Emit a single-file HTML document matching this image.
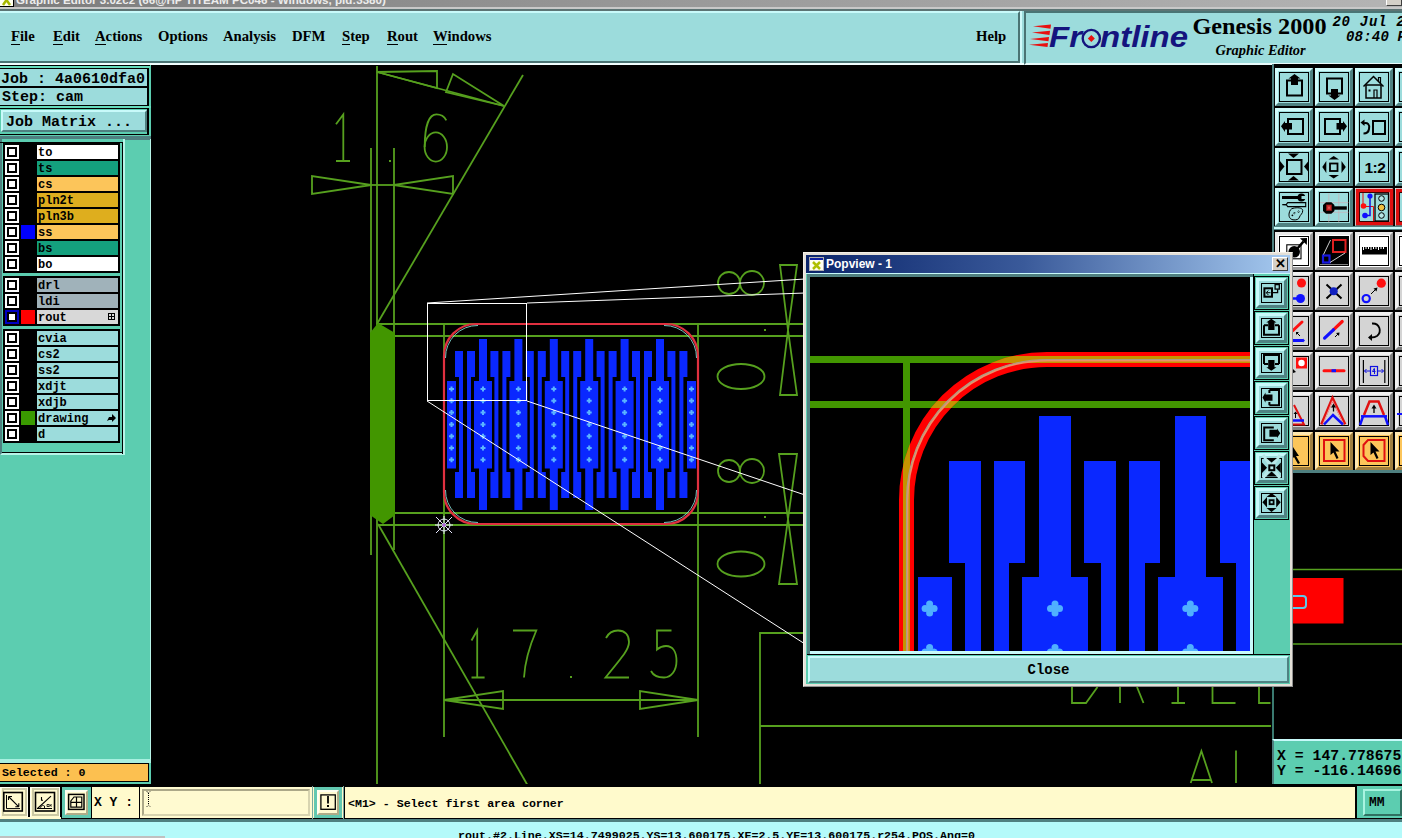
<!DOCTYPE html><html><head><meta charset="utf-8"><style>
*{box-sizing:border-box}
html{overflow:hidden;width:1402px;height:838px}
body{margin:0;width:1402px;height:838px;overflow:hidden;position:relative;background:#000;font-family:"Liberation Sans",sans-serif}
.ab{position:absolute}
.mono{font-family:"Liberation Mono",monospace;font-weight:bold}
.serif{font-family:"Liberation Serif",serif;font-weight:bold}
.menu span{position:absolute;top:14px;font-size:14.7px;line-height:18px}
.menu u{text-decoration:none;border-bottom:1px solid #000}
.row{position:absolute;left:3px;width:117px;height:14px}
.cb{position:absolute;left:2px;top:0;width:14px;height:14px;background:#fff;border:2px solid #fff}
.cb:after{content:"";position:absolute;left:0;top:0;width:10px;height:10px;border:2px solid #000;box-sizing:border-box}
.nm{position:absolute;left:34px;top:0;width:81px;height:14px;font-size:12px;line-height:14px;padding:1px 0 0 1px;color:#000;overflow:visible}
.tb{position:absolute;width:38px;height:38px;background:#9cdcdc;border-top:2px solid #d0fafa;border-left:2px solid #d0fafa;border-right:2px solid #4f8282;border-bottom:2px solid #4f8282}
.tb i{position:absolute;left:2px;top:2px;right:2px;bottom:2px;border:2px solid #000;border-top-color:#000}
</style></head><body>

<div class="ab" style="left:0;top:0;width:1402px;height:8px;background:linear-gradient(90deg,#7c7c7c,#9a9a9a 50%,#b4b4b4);overflow:hidden">
<div class="ab" style="left:0;top:-8px;width:14px;height:15px;background:#fffff0;border-bottom:1px solid #000;border-right:1px solid #000"><svg width="13" height="14" style="position:absolute;left:0;top:0"><path d="M3,3 L10,13 M10,3 L3,13" stroke="#a8b800" stroke-width="2.5"/></svg></div>
<div class="ab" style="left:16px;top:-7px;font-size:11.6px;font-weight:bold;color:#ececec;white-space:nowrap;line-height:13px">Graphic Editor 3.02c2 (66@HP TITEAM PC046 - Windows, pid:3380)</div>
<div class="ab" style="left:1386px;top:-6px;width:16px;height:12px;background:#d4d0c8;border:1px solid #fff;border-right-color:#404040;border-bottom-color:#404040"></div>
</div>
<div class="ab" style="left:0;top:7px;width:1402px;height:2px;background:#c8c8c8"></div>
<div class="ab" style="left:0;top:9px;width:1402px;height:2px;background:#5c7474"></div>

<div class="ab menu serif" style="left:0;top:11px;width:1020px;height:52px;background:#9cdcdc;border-top:2px solid #c8fafa;border-bottom:2px solid #4a7474;border-right:2px solid #4a7474">

<span style="left:11px"><u>F</u>ile</span>
<span style="left:53px"><u>E</u>dit</span>
<span style="left:95px"><u>A</u>ctions</span>
<span style="left:158px">Options</span>
<span style="left:223px">Analysis</span>
<span style="left:292px">DFM</span>
<span style="left:342px"><u>S</u>tep</span>
<span style="left:387px"><u>R</u>out</span>
<span style="left:433px"><u>W</u>indows</span>
<span style="left:976px">Help</span>
</div>
<div class="ab" style="left:1020px;top:11px;width:5px;height:53px;background:#9cdcdc;border-left:2px solid #d0fafa"></div>
<div class="ab" style="left:1024px;top:11px;width:378px;height:54px;background:#9cdcdc;border-top:2px solid #4a7474;border-left:2px solid #4a7474;border-bottom:2px solid #e8fcfc"></div>
<div class="ab" style="left:0;top:63px;width:1024px;height:2px;background:#f0ffff"></div>
<svg class="ab" style="left:1024px;top:11px" width="378" height="53" viewBox="1024 11 378 53">
<g fill="#e81010"><polygon points="1033,26.3 1051,24.5 1050.5,28.8"/><polygon points="1032,32.6 1050,30.8 1049.5,35"/><polygon points="1030,38.9 1049,37 1048.5,41.3"/><polygon points="1029,44.8 1048,43 1047.5,47"/></g>
<text x="1049" y="46.8" font-family="Liberation Sans" font-weight="bold" font-style="italic" font-size="30" fill="#14147e" textLength="33" lengthAdjust="spacingAndGlyphs">Fr</text>
<circle cx="1091.3" cy="38.5" r="8.6" fill="none" stroke="#14147e" stroke-width="2.4"/>
<polygon points="1091.3,35 1094.8,38.5 1091.3,42 1087.8,38.5" fill="#e81010"/>
<text x="1100" y="46.8" font-family="Liberation Sans" font-weight="bold" font-style="italic" font-size="30" fill="#14147e" textLength="88" lengthAdjust="spacingAndGlyphs">ntline</text>
<text x="1192.5" y="33.8" font-family="Liberation Serif" font-weight="bold" font-size="24" fill="#000" textLength="134" lengthAdjust="spacingAndGlyphs">Genesis 2000</text>
<text x="1215.5" y="55" font-family="Liberation Serif" font-weight="bold" font-style="italic" font-size="14" fill="#000" textLength="90" lengthAdjust="spacingAndGlyphs">Graphic Editor</text>
<text x="1332.5" y="25.8" font-family="Liberation Mono" font-weight="bold" font-style="italic" font-size="14" fill="#000" letter-spacing="0.7" xml:space="preserve">20 Jul 2006</text>
<text x="1346" y="40.7" font-family="Liberation Mono" font-weight="bold" font-style="italic" font-size="14" fill="#000" letter-spacing="0.2" xml:space="preserve">08:40 PM</text>
</svg>
<div class="ab" style="left:0;top:65px;width:151px;height:719px;background:#5ccdb0"></div>
<div class="ab" style="left:0;top:65px;width:150px;height:1px;background:#000"></div>
<div class="ab" style="left:0;top:66px;width:150px;height:2px;background:#66dcbc"></div>
<div class="ab mono" style="left:0;top:68px;width:149px;height:20px;background:#9cdcdc;border-top:1px solid #000;border-bottom:2px solid #000;border-right:2px solid #000;font-size:15px;line-height:17px;padding:2px 0 0 1px;white-space:pre">Job : 4a0610dfa0</div>
<div class="ab mono" style="left:0;top:88px;width:149px;height:18px;background:#9cdcdc;border-bottom:1px solid #000;border-right:2px solid #000;font-size:15px;line-height:17px;padding:1px 0 0 2px;white-space:pre">Step: cam</div>
<div class="ab" style="left:0;top:106px;width:151px;height:2px;background:#66dcbc"></div>
<div class="ab" style="left:0;top:108px;width:149px;height:27px;border:1px solid #000;border-left:none;border-right:2px solid #000;background:#5ccdb0"></div>
<div class="ab mono" style="left:1px;top:110px;width:146px;height:22px;background:#9cdcdc;border-top:2px solid #c8fafa;border-left:2px solid #c8fafa;border-right:2px solid #4f8080;border-bottom:2px solid #4f8080;font-size:15px;line-height:17px;padding:2px 0 0 3px;white-space:pre">Job Matrix ...</div>
<div class="ab" style="left:0;top:134px;width:149px;height:1px;background:#000"></div>
<div class="ab" style="left:0;top:136px;width:151px;height:3.5px;background:#4f8080"></div>
<div class="ab" style="left:123px;top:139px;width:2px;height:316px;background:#b8f4e8"></div><div class="ab" style="left:149.5px;top:139px;width:1.5px;height:622px;background:#b8f4e8"></div><div class="ab" style="left:0;top:758.5px;width:151px;height:2.5px;background:#a8f0e0"></div>
<div class="ab" style="left:0;top:139px;width:123px;height:316px;background:#5ccdb0;border-left:2px solid #4f8080;border-bottom:2px solid #b8f4e8"></div>
<div class="ab" style="left:0;top:141.5px;width:123px;height:1.5px;background:#000"></div>
<div class="ab" style="left:121.5px;top:141.5px;width:1.5px;height:312px;background:#000"></div>
<div class="ab" style="left:2px;top:451.5px;width:121px;height:1.5px;background:#000"></div>

<div class="ab" style="left:3px;top:143px;width:117px;height:130px;background:#000"></div>
<div class="row" style="top:145px"><div class="cb"></div>
<div class="nm mono" style="background:#ffffff">to</div></div>
<div class="row" style="top:161px"><div class="cb"></div>
<div class="nm mono" style="background:#14a07e">ts</div></div>
<div class="row" style="top:177px"><div class="cb"></div>
<div class="nm mono" style="background:#fcc55a">cs</div></div>
<div class="row" style="top:193px"><div class="cb"></div>
<div class="nm mono" style="background:#deae1e">pln2t</div></div>
<div class="row" style="top:209px"><div class="cb"></div>
<div class="nm mono" style="background:#deae1e">pln3b</div></div>
<div class="row" style="top:225px"><div class="cb"></div>
<div class="ab" style="left:18px;top:0;width:14px;height:14px;background:#0000ff"></div>
<div class="nm mono" style="background:#fcc55a">ss</div></div>
<div class="row" style="top:241px"><div class="cb"></div>
<div class="nm mono" style="background:#14a07e">bs</div></div>
<div class="row" style="top:257px"><div class="cb"></div>
<div class="nm mono" style="background:#ffffff">bo</div></div>
<div class="ab" style="left:3px;top:276px;width:117px;height:50px;background:#000"></div>
<div class="row" style="top:278px"><div class="cb"></div>
<div class="nm mono" style="background:#a0b2ba">drl</div></div>
<div class="row" style="top:294px"><div class="cb"></div>
<div class="nm mono" style="background:#a0b2ba">ldi</div></div>
<div class="row" style="top:310px"><div class="cb" style="border-color:#0000c0"></div>
<div class="ab" style="left:18px;top:0;width:14px;height:14px;background:#ff0000"></div>
<div class="nm mono" style="background:#d8d8d8">rout<span style="position:absolute;right:3px;top:3px;width:7px;height:7px;border:1px solid #000;background:linear-gradient(#000,#000) 2px 0/1px 7px no-repeat,linear-gradient(#000,#000) 0 2px/7px 1px no-repeat"></span></div></div>
<div class="ab" style="left:3px;top:329px;width:117px;height:114px;background:#000"></div>
<div class="row" style="top:331px"><div class="cb"></div>
<div class="nm mono" style="background:#9cdcdc">cvia</div></div>
<div class="row" style="top:347px"><div class="cb"></div>
<div class="nm mono" style="background:#9cdcdc">cs2</div></div>
<div class="row" style="top:363px"><div class="cb"></div>
<div class="nm mono" style="background:#9cdcdc">ss2</div></div>
<div class="row" style="top:379px"><div class="cb"></div>
<div class="nm mono" style="background:#9cdcdc">xdjt</div></div>
<div class="row" style="top:395px"><div class="cb"></div>
<div class="nm mono" style="background:#9cdcdc">xdjb</div></div>
<div class="row" style="top:411px"><div class="cb"></div>
<div class="ab" style="left:18px;top:0;width:14px;height:14px;background:#3a9a00"></div>
<div class="nm mono" style="background:#9cdcdc">drawing<svg style="position:absolute;right:2px;top:3px" width="9" height="8"><polygon points="0,7 2,3 5,3 5,0 9,4 5,8 5,6 2,6" fill="#000"/></svg></div></div>
<div class="row" style="top:427px"><div class="cb"></div>
<div class="nm mono" style="background:#9cdcdc">d</div></div>
<div class="ab" style="left:0;top:761px;width:151px;height:2px;background:#a8f0e0"></div>
<div class="ab mono" style="left:0;top:763px;width:149px;height:19px;background:#fcc050;border:1px solid #000;border-left:none;font-size:11.6px;line-height:17px;padding-left:2px;white-space:pre">Selected : 0</div>
<svg class="ab" style="left:0;top:0" width="1402" height="838" viewBox="0 0 1402 838">
<defs><clipPath id="cv"><rect x="151" y="65" width="1251" height="721"/></clipPath></defs>
<g clip-path="url(#cv)" fill="none" stroke="#56a01e" stroke-width="1.8">
<line x1="377" y1="66" x2="377" y2="786"/>
<line x1="371" y1="148" x2="371" y2="555"/>
<line x1="394" y1="148" x2="394" y2="550"/>
<line x1="371" y1="185" x2="394" y2="185"/>
<polygon points="312,176 312,194 371,185"/><polygon points="394,185 453,176 453,194"/>
<line x1="523" y1="75" x2="377" y2="324" />
<polygon points="377,72 437,71 437,88"/><polygon points="504,106 453,74 446,92"/><line x1="377" y1="72" x2="504" y2="106"/>
<path d="M336,124.3 L343.3,114.4 L343.3,161 M336,161 L350,161"/>
<path d="M446.3,120.3 C444,116 440,114.4 436.5,114.4 C429,114.4 424.7,126 424.7,147"/><ellipse cx="435.8" cy="147" rx="11.2" ry="14.6"/>
<rect x="389" y="160" width="2" height="2" fill="#56a01e" stroke="none"/>
<line x1="378" y1="324" x2="1272" y2="324"/>
<line x1="394" y1="336" x2="1272" y2="336"/>
<line x1="394" y1="513" x2="1272" y2="513"/>
<line x1="378" y1="525" x2="1272" y2="525"/>
<line x1="444" y1="324" x2="444" y2="737"/>
<line x1="698" y1="324" x2="698" y2="737"/>
<line x1="378" y1="524" x2="528" y2="786"/>
<line x1="444" y1="700" x2="698" y2="700"/>
<polygon points="444,700 503,691 503,709"/><polygon points="698,700 640,691 640,709"/>
<path d="M471.5,640.5 L477.2,630.5 L477.2,677.5 M471.5,677.5 L484.6,677.5"/>
<path d="M513,630.5 L536.3,630.5 C530,645 525,660 524,677.5"/>
<rect x="570" y="676" width="2" height="2" fill="#56a01e" stroke="none"/>
<path d="M606,638 C609,632 613,630.5 618,630.5 C625,630.5 629,635 629,642 C629,649 624,655 605.5,677.5 L629,677.5"/>
<path d="M671.5,630.5 L657,630.5 L657,649.5 C660,647 663,646 666,646 C673,646 676.5,652 676.5,661 C676.5,671 671,677.5 664,677.5 C658,677.5 653,675 651,671"/>
<circle cx="729" cy="283" r="11"/><circle cx="752" cy="283" r="12"/>
<circle cx="729" cy="471" r="11"/><circle cx="752" cy="471" r="12"/>
<ellipse cx="741" cy="376.5" rx="23.5" ry="12.5"/>
<ellipse cx="741" cy="564" rx="23.5" ry="12.5"/>
<polygon points="780,265 797,265 788,330 797,395 780,395 788,330"/>
<polygon points="779,454 797,454 788,519 797,584 779,584 788,519"/>
<rect x="764" y="329" width="2" height="2" fill="#56a01e" stroke="none"/><rect x="764" y="516" width="2" height="2" fill="#56a01e" stroke="none"/>
<path d="M760,786 L760,633 L810,633"/>
<line x1="760" y1="726" x2="1271" y2="726"/>
<line x1="1273" y1="470" x2="1273" y2="786" stroke="#3a7a70" stroke-width="2"/>
<line x1="1290" y1="569.5" x2="1402" y2="569.5" stroke-width="1.5"/><line x1="1290" y1="644" x2="1402" y2="644" stroke-width="1.5"/>
<path d="M1072,686 L1072,703 L1086,703 L1097.5,687"/>
<path d="M1120,686 L1120,703 M1137,687 L1143.5,703"/>
<path d="M1178,686 L1178,703 M1171.5,703 L1185,703"/>
<path d="M1212.5,686 L1212.5,703 L1235.5,703 M1259,686 L1259,703 L1270.5,703"/>
<path d="M1190.7,783 L1201.4,751 L1212,783 M1191.5,780 H1211"/>
<line x1="1236" y1="750.5" x2="1236" y2="783"/>
</g>
<polygon points="370,333 378,323 395,333 395,515 383,524 370,515" fill="#429600" clip-path="url(#cv)"/>
<g clip-path="url(#cv)">
<rect x="447.0" y="381.0" width="9.0" height="87.5" fill="#0a28ff"/>
<rect x="687.0" y="381.0" width="9.0" height="87.5" fill="#0a28ff"/>
<rect x="479.0" y="339.0" width="8.0" height="171.0" fill="#0a28ff"/>
<rect x="474.0" y="381.0" width="18.0" height="87.5" fill="#0a28ff"/>
<rect x="514.4" y="339.0" width="8.0" height="171.0" fill="#0a28ff"/>
<rect x="509.4" y="381.0" width="18.0" height="87.5" fill="#0a28ff"/>
<rect x="549.8" y="339.0" width="8.0" height="171.0" fill="#0a28ff"/>
<rect x="544.8" y="381.0" width="18.0" height="87.5" fill="#0a28ff"/>
<rect x="585.2" y="339.0" width="8.0" height="171.0" fill="#0a28ff"/>
<rect x="580.2" y="381.0" width="18.0" height="87.5" fill="#0a28ff"/>
<rect x="620.6" y="339.0" width="8.0" height="171.0" fill="#0a28ff"/>
<rect x="615.6" y="381.0" width="18.0" height="87.5" fill="#0a28ff"/>
<rect x="656.0" y="339.0" width="8.0" height="171.0" fill="#0a28ff"/>
<rect x="651.0" y="381.0" width="18.0" height="87.5" fill="#0a28ff"/>
<rect x="455.0" y="351.0" width="8.0" height="26.0" fill="#0a28ff"/>
<rect x="459.0" y="377.0" width="4.0" height="95.0" fill="#0a28ff"/>
<rect x="455.0" y="472.0" width="8.0" height="26.0" fill="#0a28ff"/>
<rect x="467.0" y="351.0" width="8.0" height="26.0" fill="#0a28ff"/>
<rect x="467.0" y="377.0" width="4.0" height="95.0" fill="#0a28ff"/>
<rect x="467.0" y="472.0" width="8.0" height="26.0" fill="#0a28ff"/>
<rect x="490.4" y="351.0" width="8.0" height="26.0" fill="#0a28ff"/>
<rect x="494.4" y="377.0" width="4.0" height="95.0" fill="#0a28ff"/>
<rect x="490.4" y="472.0" width="8.0" height="26.0" fill="#0a28ff"/>
<rect x="502.4" y="351.0" width="8.0" height="26.0" fill="#0a28ff"/>
<rect x="502.4" y="377.0" width="4.0" height="95.0" fill="#0a28ff"/>
<rect x="502.4" y="472.0" width="8.0" height="26.0" fill="#0a28ff"/>
<rect x="525.8" y="351.0" width="8.0" height="26.0" fill="#0a28ff"/>
<rect x="529.8" y="377.0" width="4.0" height="95.0" fill="#0a28ff"/>
<rect x="525.8" y="472.0" width="8.0" height="26.0" fill="#0a28ff"/>
<rect x="537.8" y="351.0" width="8.0" height="26.0" fill="#0a28ff"/>
<rect x="537.8" y="377.0" width="4.0" height="95.0" fill="#0a28ff"/>
<rect x="537.8" y="472.0" width="8.0" height="26.0" fill="#0a28ff"/>
<rect x="561.2" y="351.0" width="8.0" height="26.0" fill="#0a28ff"/>
<rect x="565.2" y="377.0" width="4.0" height="95.0" fill="#0a28ff"/>
<rect x="561.2" y="472.0" width="8.0" height="26.0" fill="#0a28ff"/>
<rect x="573.2" y="351.0" width="8.0" height="26.0" fill="#0a28ff"/>
<rect x="573.2" y="377.0" width="4.0" height="95.0" fill="#0a28ff"/>
<rect x="573.2" y="472.0" width="8.0" height="26.0" fill="#0a28ff"/>
<rect x="596.6" y="351.0" width="8.0" height="26.0" fill="#0a28ff"/>
<rect x="600.6" y="377.0" width="4.0" height="95.0" fill="#0a28ff"/>
<rect x="596.6" y="472.0" width="8.0" height="26.0" fill="#0a28ff"/>
<rect x="608.6" y="351.0" width="8.0" height="26.0" fill="#0a28ff"/>
<rect x="608.6" y="377.0" width="4.0" height="95.0" fill="#0a28ff"/>
<rect x="608.6" y="472.0" width="8.0" height="26.0" fill="#0a28ff"/>
<rect x="632.0" y="351.0" width="8.0" height="26.0" fill="#0a28ff"/>
<rect x="636.0" y="377.0" width="4.0" height="95.0" fill="#0a28ff"/>
<rect x="632.0" y="472.0" width="8.0" height="26.0" fill="#0a28ff"/>
<rect x="644.0" y="351.0" width="8.0" height="26.0" fill="#0a28ff"/>
<rect x="644.0" y="377.0" width="4.0" height="95.0" fill="#0a28ff"/>
<rect x="644.0" y="472.0" width="8.0" height="26.0" fill="#0a28ff"/>
<rect x="667.4" y="351.0" width="8.0" height="26.0" fill="#0a28ff"/>
<rect x="671.4" y="377.0" width="4.0" height="95.0" fill="#0a28ff"/>
<rect x="667.4" y="472.0" width="8.0" height="26.0" fill="#0a28ff"/>
<rect x="679.4" y="351.0" width="8.0" height="26.0" fill="#0a28ff"/>
<rect x="679.4" y="377.0" width="4.0" height="95.0" fill="#0a28ff"/>
<rect x="679.4" y="472.0" width="8.0" height="26.0" fill="#0a28ff"/>
<path d="M449.0,389.0 h5 M451.5,386.5 v5" stroke="#5ab4ff" stroke-width="2"/>
<path d="M449.0,400.8 h5 M451.5,398.3 v5" stroke="#5ab4ff" stroke-width="2"/>
<path d="M449.0,412.6 h5 M451.5,410.1 v5" stroke="#5ab4ff" stroke-width="2"/>
<path d="M449.0,424.4 h5 M451.5,421.9 v5" stroke="#5ab4ff" stroke-width="2"/>
<path d="M449.0,436.2 h5 M451.5,433.7 v5" stroke="#5ab4ff" stroke-width="2"/>
<path d="M449.0,448.0 h5 M451.5,445.5 v5" stroke="#5ab4ff" stroke-width="2"/>
<path d="M449.0,459.8 h5 M451.5,457.3 v5" stroke="#5ab4ff" stroke-width="2"/>
<path d="M480.5,389.0 h5 M483.0,386.5 v5" stroke="#5ab4ff" stroke-width="2"/>
<path d="M480.5,400.8 h5 M483.0,398.3 v5" stroke="#5ab4ff" stroke-width="2"/>
<path d="M480.5,412.6 h5 M483.0,410.1 v5" stroke="#5ab4ff" stroke-width="2"/>
<path d="M480.5,424.4 h5 M483.0,421.9 v5" stroke="#5ab4ff" stroke-width="2"/>
<path d="M480.5,436.2 h5 M483.0,433.7 v5" stroke="#5ab4ff" stroke-width="2"/>
<path d="M480.5,448.0 h5 M483.0,445.5 v5" stroke="#5ab4ff" stroke-width="2"/>
<path d="M480.5,459.8 h5 M483.0,457.3 v5" stroke="#5ab4ff" stroke-width="2"/>
<path d="M515.9,389.0 h5 M518.4,386.5 v5" stroke="#5ab4ff" stroke-width="2"/>
<path d="M515.9,400.8 h5 M518.4,398.3 v5" stroke="#5ab4ff" stroke-width="2"/>
<path d="M515.9,412.6 h5 M518.4,410.1 v5" stroke="#5ab4ff" stroke-width="2"/>
<path d="M515.9,424.4 h5 M518.4,421.9 v5" stroke="#5ab4ff" stroke-width="2"/>
<path d="M515.9,436.2 h5 M518.4,433.7 v5" stroke="#5ab4ff" stroke-width="2"/>
<path d="M515.9,448.0 h5 M518.4,445.5 v5" stroke="#5ab4ff" stroke-width="2"/>
<path d="M515.9,459.8 h5 M518.4,457.3 v5" stroke="#5ab4ff" stroke-width="2"/>
<path d="M551.3,389.0 h5 M553.8,386.5 v5" stroke="#5ab4ff" stroke-width="2"/>
<path d="M551.3,400.8 h5 M553.8,398.3 v5" stroke="#5ab4ff" stroke-width="2"/>
<path d="M551.3,412.6 h5 M553.8,410.1 v5" stroke="#5ab4ff" stroke-width="2"/>
<path d="M551.3,424.4 h5 M553.8,421.9 v5" stroke="#5ab4ff" stroke-width="2"/>
<path d="M551.3,436.2 h5 M553.8,433.7 v5" stroke="#5ab4ff" stroke-width="2"/>
<path d="M551.3,448.0 h5 M553.8,445.5 v5" stroke="#5ab4ff" stroke-width="2"/>
<path d="M551.3,459.8 h5 M553.8,457.3 v5" stroke="#5ab4ff" stroke-width="2"/>
<path d="M586.7,389.0 h5 M589.2,386.5 v5" stroke="#5ab4ff" stroke-width="2"/>
<path d="M586.7,400.8 h5 M589.2,398.3 v5" stroke="#5ab4ff" stroke-width="2"/>
<path d="M586.7,412.6 h5 M589.2,410.1 v5" stroke="#5ab4ff" stroke-width="2"/>
<path d="M586.7,424.4 h5 M589.2,421.9 v5" stroke="#5ab4ff" stroke-width="2"/>
<path d="M586.7,436.2 h5 M589.2,433.7 v5" stroke="#5ab4ff" stroke-width="2"/>
<path d="M586.7,448.0 h5 M589.2,445.5 v5" stroke="#5ab4ff" stroke-width="2"/>
<path d="M586.7,459.8 h5 M589.2,457.3 v5" stroke="#5ab4ff" stroke-width="2"/>
<path d="M622.1,389.0 h5 M624.6,386.5 v5" stroke="#5ab4ff" stroke-width="2"/>
<path d="M622.1,400.8 h5 M624.6,398.3 v5" stroke="#5ab4ff" stroke-width="2"/>
<path d="M622.1,412.6 h5 M624.6,410.1 v5" stroke="#5ab4ff" stroke-width="2"/>
<path d="M622.1,424.4 h5 M624.6,421.9 v5" stroke="#5ab4ff" stroke-width="2"/>
<path d="M622.1,436.2 h5 M624.6,433.7 v5" stroke="#5ab4ff" stroke-width="2"/>
<path d="M622.1,448.0 h5 M624.6,445.5 v5" stroke="#5ab4ff" stroke-width="2"/>
<path d="M622.1,459.8 h5 M624.6,457.3 v5" stroke="#5ab4ff" stroke-width="2"/>
<path d="M657.5,389.0 h5 M660.0,386.5 v5" stroke="#5ab4ff" stroke-width="2"/>
<path d="M657.5,400.8 h5 M660.0,398.3 v5" stroke="#5ab4ff" stroke-width="2"/>
<path d="M657.5,412.6 h5 M660.0,410.1 v5" stroke="#5ab4ff" stroke-width="2"/>
<path d="M657.5,424.4 h5 M660.0,421.9 v5" stroke="#5ab4ff" stroke-width="2"/>
<path d="M657.5,436.2 h5 M660.0,433.7 v5" stroke="#5ab4ff" stroke-width="2"/>
<path d="M657.5,448.0 h5 M660.0,445.5 v5" stroke="#5ab4ff" stroke-width="2"/>
<path d="M657.5,459.8 h5 M660.0,457.3 v5" stroke="#5ab4ff" stroke-width="2"/>
<path d="M689.0,389.0 h5 M691.5,386.5 v5" stroke="#5ab4ff" stroke-width="2"/>
<path d="M689.0,400.8 h5 M691.5,398.3 v5" stroke="#5ab4ff" stroke-width="2"/>
<path d="M689.0,412.6 h5 M691.5,410.1 v5" stroke="#5ab4ff" stroke-width="2"/>
<path d="M689.0,424.4 h5 M691.5,421.9 v5" stroke="#5ab4ff" stroke-width="2"/>
<path d="M689.0,436.2 h5 M691.5,433.7 v5" stroke="#5ab4ff" stroke-width="2"/>
<path d="M689.0,448.0 h5 M691.5,445.5 v5" stroke="#5ab4ff" stroke-width="2"/>
<path d="M689.0,459.8 h5 M691.5,457.3 v5" stroke="#5ab4ff" stroke-width="2"/>
<rect x="444" y="324" width="254" height="200" rx="32" ry="32" fill="none" stroke="#e03040" stroke-width="2.2"/><path d="M445.5,358 A32,32 0 0 1 478,325.5 M664,325.5 A32,32 0 0 1 696.5,358 M696.5,490 A32,32 0 0 1 664,522.5 M478,522.5 A32,32 0 0 1 445.5,490" fill="none" stroke="#80d8d0" stroke-width="0.9"/>
</g>
<g stroke="#fff" stroke-width="1" fill="none" clip-path="url(#cv)">
<rect x="427.5" y="303.5" width="99" height="97"/>
<line x1="427" y1="303" x2="805" y2="279"/><line x1="527" y1="303" x2="805" y2="293"/>
<line x1="427" y1="401" x2="805" y2="644"/><line x1="527" y1="401" x2="805" y2="495"/>
</g>
<g stroke="#e8e8ff" stroke-width="1" fill="none"><circle cx="444" cy="525" r="6"/><path d="M436,517 L452,533 M452,517 L436,533 M444,516 V534 M435,525 H453"/></g><circle cx="444" cy="525" r="1.8" fill="#b060e0"/>
<rect x="1290" y="578" width="53.5" height="45.5" fill="#ff0000"/><path d="M1290,596 H1303 Q1306,596 1306,599 V605 Q1306,608 1303,608 H1290" fill="none" stroke="#60c8e8" stroke-width="2"/>
</svg>
<div class="ab" style="left:1272px;top:64px;width:130px;height:409px;background:#000;border-left:2px solid #4f8080"></div>
<div class="ab" style="left:1274.5px;top:68px;width:38px;height:38px;background:#9cdcdc;border:3px solid;border-color:#d0fafa #4f8282 #4f8282 #d0fafa"><div class="ab" style="left:1px;top:1px;width:30px;height:30px;border:1px solid #000"></div></div>
<div class="ab" style="left:1315px;top:68px;width:38px;height:38px;background:#9cdcdc;border:3px solid;border-color:#d0fafa #4f8282 #4f8282 #d0fafa"><div class="ab" style="left:1px;top:1px;width:30px;height:30px;border:1px solid #000"></div></div>
<div class="ab" style="left:1355px;top:68px;width:38px;height:38px;background:#9cdcdc;border:3px solid;border-color:#d0fafa #4f8282 #4f8282 #d0fafa"><div class="ab" style="left:1px;top:1px;width:30px;height:30px;border:1px solid #000"></div></div>
<div class="ab" style="left:1395px;top:68px;width:38px;height:38px;background:#9cdcdc;border:3px solid;border-color:#d0fafa #4f8282 #4f8282 #d0fafa"><div class="ab" style="left:1px;top:1px;width:30px;height:30px;border:1px solid #000"></div></div>
<div class="ab" style="left:1274.5px;top:108px;width:38px;height:38px;background:#9cdcdc;border:3px solid;border-color:#d0fafa #4f8282 #4f8282 #d0fafa"><div class="ab" style="left:1px;top:1px;width:30px;height:30px;border:1px solid #000"></div></div>
<div class="ab" style="left:1315px;top:108px;width:38px;height:38px;background:#9cdcdc;border:3px solid;border-color:#d0fafa #4f8282 #4f8282 #d0fafa"><div class="ab" style="left:1px;top:1px;width:30px;height:30px;border:1px solid #000"></div></div>
<div class="ab" style="left:1355px;top:108px;width:38px;height:38px;background:#9cdcdc;border:3px solid;border-color:#d0fafa #4f8282 #4f8282 #d0fafa"><div class="ab" style="left:1px;top:1px;width:30px;height:30px;border:1px solid #000"></div></div>
<div class="ab" style="left:1395px;top:108px;width:38px;height:38px;background:#9cdcdc;border:3px solid;border-color:#d0fafa #4f8282 #4f8282 #d0fafa"><div class="ab" style="left:1px;top:1px;width:30px;height:30px;border:1px solid #000"></div></div>
<div class="ab" style="left:1274.5px;top:148px;width:38px;height:38px;background:#9cdcdc;border:3px solid;border-color:#d0fafa #4f8282 #4f8282 #d0fafa"><div class="ab" style="left:1px;top:1px;width:30px;height:30px;border:1px solid #000"></div></div>
<div class="ab" style="left:1315px;top:148px;width:38px;height:38px;background:#9cdcdc;border:3px solid;border-color:#d0fafa #4f8282 #4f8282 #d0fafa"><div class="ab" style="left:1px;top:1px;width:30px;height:30px;border:1px solid #000"></div></div>
<div class="ab" style="left:1355px;top:148px;width:38px;height:38px;background:#9cdcdc;border:3px solid;border-color:#d0fafa #4f8282 #4f8282 #d0fafa"><div class="ab" style="left:1px;top:1px;width:30px;height:30px;border:1px solid #000"></div></div>
<div class="ab" style="left:1395px;top:148px;width:38px;height:38px;background:#9cdcdc;border:3px solid;border-color:#d0fafa #4f8282 #4f8282 #d0fafa"><div class="ab" style="left:1px;top:1px;width:30px;height:30px;border:1px solid #000"></div></div>
<div class="ab" style="left:1274.5px;top:188px;width:38px;height:38px;background:#9cdcdc;border:3px solid;border-color:#d0fafa #4f8282 #4f8282 #d0fafa"><div class="ab" style="left:1px;top:1px;width:30px;height:30px;border:1px solid #000"></div></div>
<div class="ab" style="left:1315px;top:188px;width:38px;height:38px;background:#9cdcdc;border:3px solid;border-color:#d0fafa #4f8282 #4f8282 #d0fafa"><div class="ab" style="left:1px;top:1px;width:30px;height:30px;border:1px solid #000"></div></div>
<div class="ab" style="left:1355px;top:188px;width:38px;height:38px;background:#9cdcdc;border:3px solid;border-color:#d0fafa #4f8282 #4f8282 #d0fafa"><div class="ab" style="left:1px;top:1px;width:30px;height:30px;border:1px solid #000"></div></div>
<div class="ab" style="left:1395px;top:188px;width:38px;height:38px;background:#9cdcdc;border:3px solid;border-color:#d0fafa #4f8282 #4f8282 #d0fafa"><div class="ab" style="left:1px;top:1px;width:30px;height:30px;border:1px solid #000"></div></div>
<div class="ab" style="left:1274.5px;top:232px;width:38px;height:38px;background:#ffffff;border:3px solid;border-color:#e8e8e8 #9a9a9a #9a9a9a #e8e8e8"><div class="ab" style="left:1px;top:1px;width:30px;height:30px;border:1px solid #000"></div></div>
<div class="ab" style="left:1315px;top:232px;width:38px;height:38px;background:#ffffff;border:3px solid;border-color:#e8e8e8 #9a9a9a #9a9a9a #e8e8e8"><div class="ab" style="left:1px;top:1px;width:30px;height:30px;border:1px solid #000"></div></div>
<div class="ab" style="left:1355px;top:232px;width:38px;height:38px;background:#ffffff;border:3px solid;border-color:#e8e8e8 #9a9a9a #9a9a9a #e8e8e8"><div class="ab" style="left:1px;top:1px;width:30px;height:30px;border:1px solid #000"></div></div>
<div class="ab" style="left:1395px;top:232px;width:38px;height:38px;background:#ffffff;border:3px solid;border-color:#e8e8e8 #9a9a9a #9a9a9a #e8e8e8"><div class="ab" style="left:1px;top:1px;width:30px;height:30px;border:1px solid #000"></div></div>
<div class="ab" style="left:1274.5px;top:272px;width:38px;height:38px;background:#d4d4d4;border:3px solid;border-color:#f0f0f0 #808080 #808080 #f0f0f0"><div class="ab" style="left:1px;top:1px;width:30px;height:30px;border:1px solid #000"></div></div>
<div class="ab" style="left:1315px;top:272px;width:38px;height:38px;background:#d4d4d4;border:3px solid;border-color:#f0f0f0 #808080 #808080 #f0f0f0"><div class="ab" style="left:1px;top:1px;width:30px;height:30px;border:1px solid #000"></div></div>
<div class="ab" style="left:1355px;top:272px;width:38px;height:38px;background:#d4d4d4;border:3px solid;border-color:#f0f0f0 #808080 #808080 #f0f0f0"><div class="ab" style="left:1px;top:1px;width:30px;height:30px;border:1px solid #000"></div></div>
<div class="ab" style="left:1395px;top:272px;width:38px;height:38px;background:#d4d4d4;border:3px solid;border-color:#f0f0f0 #808080 #808080 #f0f0f0"><div class="ab" style="left:1px;top:1px;width:30px;height:30px;border:1px solid #000"></div></div>
<div class="ab" style="left:1274.5px;top:312px;width:38px;height:38px;background:#d4d4d4;border:3px solid;border-color:#f0f0f0 #808080 #808080 #f0f0f0"><div class="ab" style="left:1px;top:1px;width:30px;height:30px;border:1px solid #000"></div></div>
<div class="ab" style="left:1315px;top:312px;width:38px;height:38px;background:#d4d4d4;border:3px solid;border-color:#f0f0f0 #808080 #808080 #f0f0f0"><div class="ab" style="left:1px;top:1px;width:30px;height:30px;border:1px solid #000"></div></div>
<div class="ab" style="left:1355px;top:312px;width:38px;height:38px;background:#d4d4d4;border:3px solid;border-color:#f0f0f0 #808080 #808080 #f0f0f0"><div class="ab" style="left:1px;top:1px;width:30px;height:30px;border:1px solid #000"></div></div>
<div class="ab" style="left:1395px;top:312px;width:38px;height:38px;background:#d4d4d4;border:3px solid;border-color:#f0f0f0 #808080 #808080 #f0f0f0"><div class="ab" style="left:1px;top:1px;width:30px;height:30px;border:1px solid #000"></div></div>
<div class="ab" style="left:1274.5px;top:352px;width:38px;height:38px;background:#d4d4d4;border:3px solid;border-color:#f0f0f0 #808080 #808080 #f0f0f0"><div class="ab" style="left:1px;top:1px;width:30px;height:30px;border:1px solid #000"></div></div>
<div class="ab" style="left:1315px;top:352px;width:38px;height:38px;background:#d4d4d4;border:3px solid;border-color:#f0f0f0 #808080 #808080 #f0f0f0"><div class="ab" style="left:1px;top:1px;width:30px;height:30px;border:1px solid #000"></div></div>
<div class="ab" style="left:1355px;top:352px;width:38px;height:38px;background:#d4d4d4;border:3px solid;border-color:#f0f0f0 #808080 #808080 #f0f0f0"><div class="ab" style="left:1px;top:1px;width:30px;height:30px;border:1px solid #000"></div></div>
<div class="ab" style="left:1395px;top:352px;width:38px;height:38px;background:#d4d4d4;border:3px solid;border-color:#f0f0f0 #808080 #808080 #f0f0f0"><div class="ab" style="left:1px;top:1px;width:30px;height:30px;border:1px solid #000"></div></div>
<div class="ab" style="left:1274.5px;top:392px;width:38px;height:38px;background:#d4d4d4;border:3px solid;border-color:#f0f0f0 #808080 #808080 #f0f0f0"><div class="ab" style="left:1px;top:1px;width:30px;height:30px;border:1px solid #000"></div></div>
<div class="ab" style="left:1315px;top:392px;width:38px;height:38px;background:#d4d4d4;border:3px solid;border-color:#f0f0f0 #808080 #808080 #f0f0f0"><div class="ab" style="left:1px;top:1px;width:30px;height:30px;border:1px solid #000"></div></div>
<div class="ab" style="left:1355px;top:392px;width:38px;height:38px;background:#d4d4d4;border:3px solid;border-color:#f0f0f0 #808080 #808080 #f0f0f0"><div class="ab" style="left:1px;top:1px;width:30px;height:30px;border:1px solid #000"></div></div>
<div class="ab" style="left:1395px;top:392px;width:38px;height:38px;background:#d4d4d4;border:3px solid;border-color:#f0f0f0 #808080 #808080 #f0f0f0"><div class="ab" style="left:1px;top:1px;width:30px;height:30px;border:1px solid #000"></div></div>
<div class="ab" style="left:1274.5px;top:432px;width:38px;height:38px;background:#fcc55a;border:3px solid;border-color:#ffe8b0 #a08040 #a08040 #ffe8b0"><div class="ab" style="left:1px;top:1px;width:30px;height:30px;border:1px solid #000"></div></div>
<div class="ab" style="left:1315px;top:432px;width:38px;height:38px;background:#fcc55a;border:3px solid;border-color:#ffe8b0 #a08040 #a08040 #ffe8b0"><div class="ab" style="left:1px;top:1px;width:30px;height:30px;border:1px solid #000"></div></div>
<div class="ab" style="left:1355px;top:432px;width:38px;height:38px;background:#fcc55a;border:3px solid;border-color:#ffe8b0 #a08040 #a08040 #ffe8b0"><div class="ab" style="left:1px;top:1px;width:30px;height:30px;border:1px solid #000"></div></div>
<div class="ab" style="left:1395px;top:432px;width:38px;height:38px;background:#fcc55a;border:3px solid;border-color:#ffe8b0 #a08040 #a08040 #ffe8b0"><div class="ab" style="left:1px;top:1px;width:30px;height:30px;border:1px solid #000"></div></div>
<svg class="ab" style="left:1272px;top:64px" width="130" height="410" viewBox="1272 64 130 410">
<rect x="1287" y="80.5" width="15" height="15" fill="none" stroke="#000" stroke-width="2"/>
<polygon points="1294.5,74 1288.5,78.5 1291,78.5 1291,85 1298,85 1298,78.5 1300.5,78.5" fill="#000"/>
<rect x="1327" y="78.5" width="15" height="15" fill="none" stroke="#000" stroke-width="2"/>
<polygon points="1334.5,100 1328.5,95.5 1331,95.5 1331,89 1338,89 1338,95.5 1340.5,95.5" fill="#000"/>
<path d="M1363.5,86.5 L1373.5,76.5 L1383.5,86.5" fill="none" stroke="#000" stroke-width="1.5"/>
<rect x="1366" y="85" width="15" height="13" fill="none" stroke="#000" stroke-width="1.5"/>
<path d="M1374,98 V90 H1377 V98" fill="none" stroke="#000" stroke-width="1.2"/><rect x="1368.5" y="89.5" width="2" height="2" fill="#000"/>
<path d="M1378.5,81 V77.5 H1380.5 V83" fill="none" stroke="#000" stroke-width="1.2"/>
<rect x="1288" y="119" width="15" height="15" fill="none" stroke="#000" stroke-width="2"/>
<polygon points="1281,126.3 1285,121 1285,123 1292,123 1292,129.6 1285,129.6 1285,132" fill="#000"/>
<rect x="1325" y="119" width="15" height="15" fill="none" stroke="#000" stroke-width="2"/>
<polygon points="1347,126.3 1343,121 1343,123 1336.5,123 1336.5,129.6 1343,129.6 1343,132" fill="#000"/>
<rect x="1373" y="121" width="12" height="13" fill="none" stroke="#000" stroke-width="2"/>
<path d="M1363,123.5 C1368,122 1370,125 1369,129 C1368.5,132.5 1366,133.5 1363.5,133.5" fill="none" stroke="#000" stroke-width="2"/><polygon points="1360.5,122.5 1364.5,119.5 1364.5,126" fill="#000"/>
<rect x="1287" y="160" width="14.5" height="14" fill="none" stroke="#000" stroke-width="2"/>
<polygon points="1288,153.5 1299,153.5 1293.5,158" fill="#000"/><polygon points="1288,180.5 1299,180.5 1293.5,176" fill="#000"/>
<polygon points="1280,161 1280,172 1284.5,166.5" fill="#000"/><polygon points="1308.5,161 1308.5,172 1304,166.5" fill="#000"/>
<rect x="1330" y="163.5" width="7.5" height="7.5" fill="none" stroke="#000" stroke-width="1.8"/>
<polygon points="1328.5,159.5 1339,159.5 1333.7,156" fill="#000"/><polygon points="1328.5,175 1339,175 1333.7,178.5" fill="#000"/>
<polygon points="1326.3,161 1326.3,173 1322.3,167" fill="#000"/><polygon points="1341.5,161 1341.5,173 1345.8,167" fill="#000"/>
<text x="1364.5" y="173" font-family="Liberation Sans" font-weight="bold" font-size="15.5" fill="#000" letter-spacing="-0.5">1:2</text>
<path d="M1282,197.5 H1298" stroke="#000" stroke-width="3"/><circle cx="1301.4" cy="197.5" r="3.9" fill="#000"/><rect x="1301.5" y="196" width="4.5" height="3" fill="#9cdcdc"/>
<path d="M1287.7,202.6 H1305.7 V206.6 H1287.7 L1286.5,205 L1282.3,204.6 L1286.5,204.2 Z" fill="none" stroke="#000" stroke-width="1.1"/>
<path d="M1293,208.3 C1297,207.3 1302.5,207.5 1302.7,210.5 C1303,213.5 1300,215 1299.5,217 C1299,219.5 1296,220.3 1293,219.8 C1289.5,219.2 1288.5,216 1289.2,213 C1289.8,210.5 1290.5,209 1293,208.3 Z" fill="none" stroke="#000" stroke-width="1"/>
<path d="M1294.4,212.2 l0.9,0.9 -0.9,0.9 -0.9,-0.9 z M1298.6,210.8 l0.9,0.9 -0.9,0.9 -0.9,-0.9 z" fill="none" stroke="#000" stroke-width="0.7"/><circle cx="1292.4" cy="215.3" r="0.9" fill="#000"/>
<g stroke="#d0a8b0" stroke-width="0.6"><path d="M1328.8,193.5 V222.5 M1338.8,193.5 V222.5 M1320,202.6 H1348.5 M1320,212.3 H1348.5"/></g>
<polygon points="1326,202.2 1331.4,202.2 1334.4,205 1334.4,211 1331.4,213.8 1326,213.8 1323,211 1323,205" fill="#000"/><rect x="1333" y="206.3" width="13.8" height="3.4" fill="#000"/>
<rect x="1326.3" y="204.9" width="5.4" height="5.7" fill="#c82828" stroke="#801010" stroke-width="0.6"/><rect x="1328" y="206.7" width="2" height="2" fill="#e05050"/>
<rect x="1357.5" y="190.5" width="34" height="33" fill="none" stroke="#e01010" stroke-width="3.5"/>
<rect x="1375" y="194" width="13.5" height="27" fill="none" stroke="#000" stroke-width="1.3"/>
<circle cx="1381.5" cy="198.5" r="2.8" fill="#b8e8e8" stroke="#000" stroke-width="1"/><circle cx="1381.5" cy="207.5" r="3.3" fill="#f0c040" stroke="#000" stroke-width="1"/><circle cx="1381.5" cy="215.5" r="2.8" fill="#b8e8e8" stroke="#000" stroke-width="1"/>
<path d="M1363,193 V206.5 H1373.5 V221" fill="none" stroke="#e01010" stroke-width="1"/><circle cx="1363.5" cy="206" r="2.8" fill="#ff1010"/>
<path d="M1370,196.5 V215.5 H1365" fill="none" stroke="#1010e0" stroke-width="1.5"/><circle cx="1370" cy="196" r="2.6" fill="#1010ff"/><circle cx="1365" cy="215.5" r="2.8" fill="#1010ff"/>
<rect x="1397.5" y="190.5" width="10" height="33" fill="none" stroke="#e01010" stroke-width="3.5"/>
<rect x="1286.8" y="244.8" width="14.2" height="14" fill="none" stroke="#000" stroke-width="1.1"/><circle cx="1294.2" cy="251.8" r="5.8" fill="#000"/><path d="M1297,249 L1303.5,241.5" stroke="#000" stroke-width="2.6"/><polygon points="1307,238 1300,238.3 1306.8,245" fill="#000"/>
<rect x="1320" y="237" width="28" height="27.5" fill="#000"/><rect x="1333" y="240" width="12.5" height="12" fill="none" stroke="#e02020" stroke-width="2"/><rect x="1323" y="255.5" width="6.5" height="7" fill="none" stroke="#1818e0" stroke-width="2.2"/><path d="M1330.5,240 L1323.5,254.5 M1330,262.5 L1345,253" stroke="#fff" stroke-width="0.8"/>
<rect x="1362" y="247" width="25" height="7.5" fill="#000"/><path d="M1363.5,247 v3 M1366,247 v2 M1368.5,247 v2 M1371,247 v3 M1373.5,247 v2 M1376,247 v2 M1378.5,247 v3 M1381,247 v2 M1383.5,247 v2" stroke="#fff" stroke-width="1"/>
<circle cx="1301.5" cy="283" r="4.5" fill="#ff1010"/><circle cx="1300.5" cy="298.5" r="4.5" fill="#1010ff"/><path d="M1293,298.5 H1298" stroke="#1010ff" stroke-width="2.5"/>
<path d="M1326.5,284.5 L1341.5,298.5 M1341.5,284.5 L1326.5,298.5" stroke="#000" stroke-width="2"/><circle cx="1333.7" cy="291.3" r="4" fill="#1020c0"/>
<circle cx="1381.3" cy="283.2" r="4.6" fill="#ff1010"/><circle cx="1366.2" cy="298.6" r="3.6" fill="none" stroke="#1010ff" stroke-width="2.2"/><path d="M1371,294 L1376.5,288.5" stroke="#000" stroke-width="1"/><polygon points="1377.5,287.5 1373.5,288.5 1376.5,291.5" fill="#000"/>
<path d="M1293,330.5 L1302,322" stroke="#ff1010" stroke-width="3" stroke-linecap="round"/><path d="M1293,340.5 H1303" stroke="#1010ff" stroke-width="3"/><polygon points="1303,338.5 1305,340.5 1303,342.5" fill="#1010ff"/><path d="M1300,336 L1297,333" stroke="#000" stroke-width="1"/><polygon points="1296,332 1296,335 1299,332" fill="#000"/>
<path d="M1333.4,329.8 L1342.2,321.5" stroke="#ff1010" stroke-width="3.2" stroke-linecap="round"/><path d="M1324.6,338.1 L1333.4,329.8" stroke="#1010ff" stroke-width="3.2" stroke-linecap="round"/><path d="M1335,337 L1338.5,333.5" stroke="#000" stroke-width="1"/><polygon points="1339.5,332.5 1336,333 1339,336" fill="#000"/>
<path d="M1372,323.5 C1380,323 1382,332 1377,336 C1375,337.5 1373,337.5 1371,337.5" fill="none" stroke="#000" stroke-width="1.8"/><polygon points="1368,337.5 1372,334 1372,341" fill="#000"/>
<rect x="1296" y="357.5" width="11" height="11" fill="#ff1010"/><circle cx="1301.5" cy="363" r="3.2" fill="#fff"/><polygon points="1293,369 1296,372 1293,373" fill="#000"/>
<path d="M1324,370.7 H1344" stroke="#ff1010" stroke-width="3" stroke-linecap="round"/><path d="M1331.5,370.7 H1336" stroke="#1010ff" stroke-width="3"/>
<path d="M1363.4,360 V383 M1384.8,360 V383" stroke="#000" stroke-width="1.2"/><rect x="1370.5" y="366.5" width="7" height="9" fill="none" stroke="#1010e0" stroke-width="1.2"/><path d="M1364.5,371 H1370.5 M1377.5,371 H1383.5 M1366.5,369 L1364.5,371 L1366.5,373 M1381.5,369 L1383.5,371 L1381.5,373 M1374.5,368 L1372.5,371.5 H1375.5 M1374.5,369 V374" fill="none" stroke="#1010e0" stroke-width="1"/>
<path d="M1294,405 L1304,424.5 H1293" fill="none" stroke="#e01010" stroke-width="2"/><path d="M1293,420.5 H1304" stroke="#1010ff" stroke-width="2.5"/><path d="M1295.5,418 V413" stroke="#000" stroke-width="1"/><polygon points="1293.5,414 1295.5,411.5 1297.5,414" fill="#000"/>
<path d="M1321.5,424.5 L1332.5,398.5 L1345,424.5" fill="none" stroke="#e01010" stroke-width="3"/><path d="M1322.8,424.5 L1332.5,400.8 L1343.8,424.5" fill="none" stroke="#f0c8c8" stroke-width="0.8"/><path d="M1324,424.5 L1333,415 L1343,424.5" fill="none" stroke="#1010ff" stroke-width="2.5"/><path d="M1333.5,411.5 V406" stroke="#000" stroke-width="1.3"/><polygon points="1331,407.5 1333.5,403.5 1336,407.5" fill="#000"/>
<path d="M1364,415 L1369.5,401.5 H1378.5 L1384,415" fill="none" stroke="#e01010" stroke-width="2.5"/><path d="M1361,416.3 H1387" stroke="#1010ff" stroke-width="2.5"/><path d="M1363,416.3 L1360,425 M1385,416.3 L1388,425" stroke="#1010ff" stroke-width="2.5"/><path d="M1374,413 V407" stroke="#000" stroke-width="1.3"/><polygon points="1371.5,408.5 1374,404.5 1376.5,408.5" fill="#000"/>
<path d="M1397,414 L1402,414" stroke="#1010ff" stroke-width="2"/>
<polygon points="1293,447 1299,456 1296,456 1300,463 1298,464 1294,457 1293,458" fill="#000"/>
<rect x="1324" y="440" width="20.5" height="21" fill="none" stroke="#e01010" stroke-width="2"/><polygon points="1330.5,442 1330.5,455 1333.5,452.5 1336.5,459 1338.5,458 1335.5,451.5 1339.5,451.5" fill="#000"/>
<path d="M1368,440 H1384.5 V461 H1368 L1363.5,456 V445 Z" fill="none" stroke="#e01010" stroke-width="2"/><polygon points="1370.5,442 1370.5,455 1373.5,452.5 1376.5,459 1378.5,458 1375.5,451.5 1379.5,451.5" fill="#000"/>
</svg>
<div class="ab" style="left:1274px;top:226px;width:128px;height:4px;background:#c8fafa;border-top:1px solid #4f8080;border-bottom:1px solid #4f8080"></div>
<div class="ab" style="left:1272px;top:470px;width:130px;height:3px;background:#4f8080"></div>
<div class="ab mono" style="left:1272px;top:739px;width:130px;height:47px;background:#5ccdb0;border-top:2px solid #c8fafa;border-left:2px solid #4f8080;border-bottom:2px solid #a8f0dc;font-size:14.8px;line-height:14.6px;padding:8px 0 0 3px;white-space:pre">X = 147.778675
Y = -116.14696</div>
<div class="ab" style="left:0;top:784px;width:1402px;height:35px;background:#000"></div>
<div class="ab" style="left:0;top:786.5px;width:1355px;height:31.5px;background:#fffacc"></div>
<div class="ab" style="left:0px;top:786.5px;width:28px;height:31px;background:#fffad0;border:1px solid #fffff0"><div class="ab" style="left:0.5px;top:0.5px;width:25px;height:28px;border:2px solid #cbc8a4"></div></div>
<div class="ab" style="left:30px;top:786.5px;width:30px;height:31px;background:#fffad0;border:1px solid #fffff0"><div class="ab" style="left:0.5px;top:0.5px;width:27px;height:28px;border:2px solid #cbc8a4"></div></div>
<div class="ab" style="left:28px;top:786px;width:2px;height:32px;background:#000"></div><div class="ab" style="left:60px;top:786px;width:2px;height:32px;background:#000"></div>
<div class="ab" style="left:0;top:817px;width:61px;height:2px;background:#fffad0"></div>
<svg class="ab" style="left:0;top:784px" width="140" height="36" viewBox="0 784 140 36">
<rect x="3.8" y="792.5" width="18.5" height="18.5" fill="none" stroke="#000" stroke-width="1.6"/>
<path d="M6.5,795 V808.6 H20" fill="none" stroke="#000" stroke-width="1"/>
<path d="M8.5,796.5 L18.8,806.8 M8.5,796.5 V800 M8.5,796.5 H12 M18.8,806.8 H15.3 M18.8,806.8 V803.3" fill="none" stroke="#000" stroke-width="1.1"/>
<rect x="35.5" y="792.5" width="19" height="18.5" fill="none" stroke="#000" stroke-width="1.6"/>
<path d="M37.5,808.5 L51,796.2 M37,808.5 H52 M41.5,797 V800.3 H43" fill="none" stroke="#000" stroke-width="1.1"/>
<path d="M40.5,808.3 C40.8,805.5 43,805 44.5,806 L44.5,808.3" fill="none" stroke="#000" stroke-width="0.9"/>
<path d="M47,804.5 h2.2 v2 h-2.2 z M50,804.3 l1.5,2.2 M51.5,804.3 l-1.5,2.2" fill="none" stroke="#000" stroke-width="0.8"/>
</svg>
<div class="ab" style="left:62px;top:786.5px;width:28.5px;height:31.5px;background:#62c8b0;border:0"><div class="ab" style="left:3px;top:3px;width:22.5px;height:25.5px;background:#fffad0;border:2px solid;border-color:#fffff0 #b0ac88 #b0ac88 #fffff0"></div></div>
<svg class="ab" style="left:62px;top:784px" width="30" height="36" viewBox="62 784 30 36">
<rect x="68.6" y="794.4" width="15.4" height="15" fill="none" stroke="#000" stroke-width="1.5"/>
<path d="M70.8,801 L74,797 H81.8 V807.2 H70.8 Z M76.5,797 V807.2 M70.8,802.3 H81.8" fill="none" stroke="#000" stroke-width="1.2"/>
</svg>
<div class="ab" style="left:90.5px;top:786px;width:1px;height:33px;background:#000"></div>
<div class="ab mono" style="left:94px;top:795px;font-size:13px;line-height:15px;white-space:pre">X Y :</div>
<div class="ab" style="left:139px;top:786px;width:1px;height:33px;background:#000"></div>
<div class="ab" style="left:140px;top:786.5px;width:172px;height:31px;background:#fffad0"><div class="ab" style="left:2px;top:2.5px;width:168px;height:26.5px;border:2px solid;border-color:#aca888 #d8d4b0 #d8d4b0 #aca888"></div></div>
<svg class="ab" style="left:145px;top:790px" width="8" height="20"><path d="M1.5,1 L3.5,3 L5.5,1 M3.5,3 V15 M1.5,17 L3.5,15 L5.5,17" stroke="#000" stroke-width="1" stroke-dasharray="1,1" fill="none"/></svg>
<div class="ab" style="left:312px;top:786px;width:1px;height:33px;background:#7aa8a0"></div>
<div class="ab" style="left:313.5px;top:786.5px;width:28.5px;height:31.5px;background:#62c8b0"><div class="ab" style="left:3px;top:3px;width:22.5px;height:25.5px;background:#fffad0;border:2px solid;border-color:#fffff0 #b0ac88 #b0ac88 #fffff0"></div></div>
<svg class="ab" style="left:318px;top:792px" width="20" height="20" viewBox="318 792 20 20"><rect x="320.9" y="794.9" width="14.4" height="14.4" fill="none" stroke="#000" stroke-width="1.3"/><path d="M328,796 V803.5" stroke="#000" stroke-width="1.8"/><rect x="327" y="805" width="2" height="2" fill="#000"/></svg>
<div class="ab" style="left:342.5px;top:786px;width:1px;height:33px;background:#7aa8a0"></div>
<div class="ab" style="left:343.5px;top:786px;width:1px;height:33px;background:#000"></div>
<div class="ab mono" style="left:348px;top:796px;font-size:11.6px;line-height:15px;white-space:pre">&lt;M1&gt; - Select first area corner</div>
<div class="ab" style="left:1355px;top:786px;width:47px;height:33px;background:#5ccdb0;border-left:2px solid #000;border-bottom:1px solid #000"></div>
<div class="ab mono" style="left:1363px;top:789px;width:39px;height:27px;background:#5ccdb0;border:2px solid;border-color:#a8f4e0 #2f7060 #2f7060 #a8f4e0;font-size:13px;line-height:23px;padding-left:4px">MM</div>
<div class="ab" style="left:0;top:819px;width:1402px;height:3px;background:#4f8080"></div>
<div class="ab" style="left:0;top:822px;width:1402px;height:16px;background:#b4fafa"></div>
<div class="ab mono" style="left:458px;top:828.5px;font-size:11.65px;line-height:14px;white-space:pre">rout.#2.Line.XS=14.7499025.YS=13.600175.XE=2.5.YE=13.600175.r254.POS.Ang=0</div>
<div class="ab" style="left:0;top:836px;width:165px;height:2px;background:#c0c0c0"></div>
<div class="ab" style="left:803px;top:252px;width:490px;height:435px;background:#e4e0d8;border:1px solid;border-color:#f4f0e8 #909090 #909090 #f4f0e8"></div>
<div class="ab" style="left:806px;top:255px;width:484px;height:18px;background:linear-gradient(90deg,#0a246a,#3a5a9a 45%,#a6caf0)"></div>
<div class="ab" style="left:809px;top:257px;width:15px;height:14px;background:#fffff0;border:1px solid #b0b0b0"><svg width="13" height="12" style="position:absolute;left:0;top:0"><rect x="0" y="0" width="13" height="2" fill="#1020a0"/><path d="M3,4 L10,11 M10,4 L3,11" stroke="#b0c000" stroke-width="2.5"/></svg></div>
<div class="ab" style="left:826px;top:256px;font-size:12px;font-weight:bold;color:#fff;line-height:16px">Popview - 1</div>
<div class="ab" style="left:1272px;top:257px;width:16px;height:14px;background:#d4d0c8;border:1px solid;border-color:#fff #404040 #404040 #fff;font-size:13px;line-height:11px;text-align:center;font-weight:bold">&#x2715;</div>
<div class="ab" style="left:806px;top:273px;width:484px;height:411px;background:#5ccdb0;border-top:1px solid #c8fafa"></div>
<div class="ab" style="left:807px;top:274px;width:446px;height:380px;background:#4f8080"></div>
<div class="ab" style="left:810px;top:277px;width:443px;height:377px;background:#c8fafa"></div>
<svg class="ab" style="left:810px;top:277px" width="440" height="374" viewBox="810 277 440 374">
<rect x="810" y="277" width="440" height="374" fill="#000"/>
<defs><mask id="bm"><rect x="810" y="277" width="440" height="374" fill="#000"/><path d="M1260,359.5 L1047,359.5 A140.5,140.5 0 0 0 906.5,500 L906.5,660" stroke="#fff" stroke-width="15" fill="none"/></mask></defs>
<g fill="#429600"><rect x="810" y="356" width="440" height="7"/><rect x="810" y="401" width="440" height="7"/><rect x="903" y="356" width="7" height="300"/></g>
<path d="M1260,359.5 L1047,359.5 A140.5,140.5 0 0 0 906.5,500 L906.5,660" stroke="#ff0000" stroke-width="15" fill="none"/>
<g fill="#c49400" mask="url(#bm)"><rect x="810" y="356" width="440" height="7"/><rect x="810" y="401" width="440" height="7"/><rect x="903" y="356" width="7" height="300"/></g>
<path d="M1260,359.5 L1047,359.5 A140.5,140.5 0 0 0 906.5,500 L906.5,660" stroke="#e8906a" stroke-width="2" fill="none" transform="translate(0.9,0.9)"/><path d="M1260,359.5 L1047,359.5 A140.5,140.5 0 0 0 906.5,500 L906.5,660" stroke="#a8a088" stroke-width="1.1" fill="none"/>
<rect x="918" y="577" width="34" height="74" fill="#0a28ff"/>
<rect x="949" y="461" width="32" height="102" fill="#0a28ff"/>
<rect x="965" y="563" width="16" height="88" fill="#0a28ff"/>
<rect x="994" y="461" width="31" height="102" fill="#0a28ff"/>
<rect x="994" y="563" width="15" height="88" fill="#0a28ff"/>
<rect x="1039" y="416" width="32" height="161" fill="#0a28ff"/>
<rect x="1022" y="577" width="66" height="74" fill="#0a28ff"/>
<rect x="1084" y="461" width="32" height="102" fill="#0a28ff"/>
<rect x="1101" y="563" width="15" height="88" fill="#0a28ff"/>
<rect x="1129" y="461" width="31" height="102" fill="#0a28ff"/>
<rect x="1129" y="563" width="16" height="88" fill="#0a28ff"/>
<rect x="1175" y="416" width="31" height="161" fill="#0a28ff"/>
<rect x="1158" y="577" width="65" height="74" fill="#0a28ff"/>
<rect x="1220" y="461" width="30" height="102" fill="#0a28ff"/>
<rect x="1236" y="563" width="14" height="88" fill="#0a28ff"/>
<g fill="#50b0ff"><circle cx="929.6" cy="604.1" r="3.5"/><circle cx="929.6" cy="613.1" r="3.5"/><circle cx="925.1" cy="608.6" r="3.5"/><circle cx="934.1" cy="608.6" r="3.5"/><rect x="926.6" y="605.6" width="6" height="6"/></g>
<g fill="#50b0ff"><circle cx="929.6" cy="647.5" r="3.5"/><circle cx="929.6" cy="656.5" r="3.5"/><circle cx="925.1" cy="652" r="3.5"/><circle cx="934.1" cy="652" r="3.5"/><rect x="926.6" y="649" width="6" height="6"/></g>
<g fill="#50b0ff"><circle cx="1055" cy="604.1" r="3.5"/><circle cx="1055" cy="613.1" r="3.5"/><circle cx="1050.5" cy="608.6" r="3.5"/><circle cx="1059.5" cy="608.6" r="3.5"/><rect x="1052" y="605.6" width="6" height="6"/></g>
<g fill="#50b0ff"><circle cx="1055" cy="647.5" r="3.5"/><circle cx="1055" cy="656.5" r="3.5"/><circle cx="1050.5" cy="652" r="3.5"/><circle cx="1059.5" cy="652" r="3.5"/><rect x="1052" y="649" width="6" height="6"/></g>
<g fill="#50b0ff"><circle cx="1190.3" cy="604.1" r="3.5"/><circle cx="1190.3" cy="613.1" r="3.5"/><circle cx="1185.8" cy="608.6" r="3.5"/><circle cx="1194.8" cy="608.6" r="3.5"/><rect x="1187.3" y="605.6" width="6" height="6"/></g>
<g fill="#50b0ff"><circle cx="1190.3" cy="647.5" r="3.5"/><circle cx="1190.3" cy="656.5" r="3.5"/><circle cx="1185.8" cy="652" r="3.5"/><circle cx="1194.8" cy="652" r="3.5"/><rect x="1187.3" y="649" width="6" height="6"/></g>
</svg>
<div class="ab" style="left:1254px;top:276px;width:35px;height:34px;background:#5ccdb0;border:1px solid #000"><div class="ab" style="left:1px;top:1px;width:31px;height:30px;background:#9cdcdc;border:3px solid;border-color:#c8fafa #4f8282 #4f8282 #c8fafa"><div class="ab" style="left:2px;top:2px;width:21px;height:20px;border:1px solid #000"></div></div></div>
<div class="ab" style="left:1254px;top:311px;width:35px;height:34px;background:#5ccdb0;border:1px solid #000"><div class="ab" style="left:1px;top:1px;width:31px;height:30px;background:#9cdcdc;border:3px solid;border-color:#c8fafa #4f8282 #4f8282 #c8fafa"><div class="ab" style="left:2px;top:2px;width:21px;height:20px;border:1px solid #000"></div></div></div>
<div class="ab" style="left:1254px;top:346px;width:35px;height:34px;background:#5ccdb0;border:1px solid #000"><div class="ab" style="left:1px;top:1px;width:31px;height:30px;background:#9cdcdc;border:3px solid;border-color:#c8fafa #4f8282 #4f8282 #c8fafa"><div class="ab" style="left:2px;top:2px;width:21px;height:20px;border:1px solid #000"></div></div></div>
<div class="ab" style="left:1254px;top:381px;width:35px;height:34px;background:#5ccdb0;border:1px solid #000"><div class="ab" style="left:1px;top:1px;width:31px;height:30px;background:#9cdcdc;border:3px solid;border-color:#c8fafa #4f8282 #4f8282 #c8fafa"><div class="ab" style="left:2px;top:2px;width:21px;height:20px;border:1px solid #000"></div></div></div>
<div class="ab" style="left:1254px;top:416px;width:35px;height:34px;background:#5ccdb0;border:1px solid #000"><div class="ab" style="left:1px;top:1px;width:31px;height:30px;background:#9cdcdc;border:3px solid;border-color:#c8fafa #4f8282 #4f8282 #c8fafa"><div class="ab" style="left:2px;top:2px;width:21px;height:20px;border:1px solid #000"></div></div></div>
<div class="ab" style="left:1254px;top:451px;width:35px;height:34px;background:#5ccdb0;border:1px solid #000"><div class="ab" style="left:1px;top:1px;width:31px;height:30px;background:#9cdcdc;border:3px solid;border-color:#c8fafa #4f8282 #4f8282 #c8fafa"><div class="ab" style="left:2px;top:2px;width:21px;height:20px;border:1px solid #000"></div></div></div>
<div class="ab" style="left:1254px;top:486px;width:35px;height:34px;background:#5ccdb0;border:1px solid #000"><div class="ab" style="left:1px;top:1px;width:31px;height:30px;background:#9cdcdc;border:3px solid;border-color:#c8fafa #4f8282 #4f8282 #c8fafa"><div class="ab" style="left:2px;top:2px;width:21px;height:20px;border:1px solid #000"></div></div></div>
<svg class="ab" style="left:1254px;top:276px" width="36" height="245" viewBox="1254 276 36 245">
<rect x="1264.4" y="288.3" width="7.6" height="8.4" fill="none" stroke="#000" stroke-width="2"/><path d="M1268.4,290.6 L1266.2,292.7 L1268.4,295 M1266.5,292.7 H1270.5" fill="none" stroke="#000" stroke-width="1"/>
<rect x="1275.1" y="284.6" width="4.2" height="4.5" fill="none" stroke="#000" stroke-width="1.3"/><path d="M1273,292.6 H1277.6 V289.2" fill="none" stroke="#000" stroke-width="1.3"/>
<path d="M1264,325.3 V334.7 H1279 V325.3" fill="none" stroke="#000" stroke-width="2"/><path d="M1264,325.3 H1268 M1275,325.3 H1279" stroke="#000" stroke-width="2"/>
<polygon points="1271.3,318.8 1266.3,322.5 1268.2,322.5 1268.2,330 1274.5,330 1274.5,322.5 1276.5,322.5" fill="#000"/>
<path d="M1264,364 V355 H1279 V364" fill="none" stroke="#000" stroke-width="2"/><path d="M1264,364 H1268 M1275,364 H1279" stroke="#000" stroke-width="2"/>
<polygon points="1271.3,370.8 1266.3,367.2 1268.2,367.2 1268.2,360 1274.5,360 1274.5,367.2 1276.5,367.2" fill="#000"/>
<path d="M1269.4,390 H1279 V405.2 H1269.4" fill="none" stroke="#000" stroke-width="2"/><path d="M1269.4,390 V393 M1269.4,402 V405.2" stroke="#000" stroke-width="2"/>
<polygon points="1262.5,397.5 1265.5,392.4 1265.5,394.5 1272.5,394.5 1272.5,400.7 1265.5,400.7 1265.5,402.8" fill="#000"/>
<path d="M1273.8,427.5 H1264.2 V440.3 H1273.8" fill="none" stroke="#000" stroke-width="2"/>
<polygon points="1280.3,433.2 1277,428.5 1277,429.8 1269.4,429.8 1269.4,436.7 1277,436.7 1277,438" fill="#000"/>
<path d="M1263,455 L1280,478 M1280,455 L1263,478" stroke="#b8e8e8" stroke-width="3"/>
<rect x="1269.3" y="465.4" width="5" height="4.8" fill="none" stroke="#000" stroke-width="2"/>
<polygon points="1266.3,458 1277,458 1271.6,462.6" fill="#000"/><polygon points="1266.3,476.4 1277,476.4 1271.6,471.6" fill="#000"/><polygon points="1262,462.4 1262,473 1267,467.7" fill="#000"/><polygon points="1280.8,462.4 1280.8,473 1275.8,467.7" fill="#000"/>
<rect x="1269.6" y="500.2" width="4" height="4" fill="none" stroke="#000" stroke-width="1.8"/>
<polygon points="1271.5,493 1266.5,497 1276.5,497" fill="#000"/><polygon points="1271.5,512 1266.5,508 1276.5,508" fill="#000"/><polygon points="1262.4,502.3 1267,497 1267,507.6" fill="#000"/><polygon points="1280.7,502.3 1276.2,497 1276.2,507.6" fill="#000"/>
</svg>
<div class="ab" style="left:1253px;top:274px;width:1px;height:380px;background:#000"></div>
<div class="ab" style="left:807px;top:654px;width:483px;height:30px;background:#5ccdb0;border-top:1px solid #000"><div class="ab mono" style="left:1px;top:1px;width:481px;height:27px;background:#9cdcdc;border:2px solid;border-color:#c8fafa #4f8282 #4f8282 #c8fafa;text-align:center;font-size:14px;line-height:24px">Close</div></div>
</body></html>
